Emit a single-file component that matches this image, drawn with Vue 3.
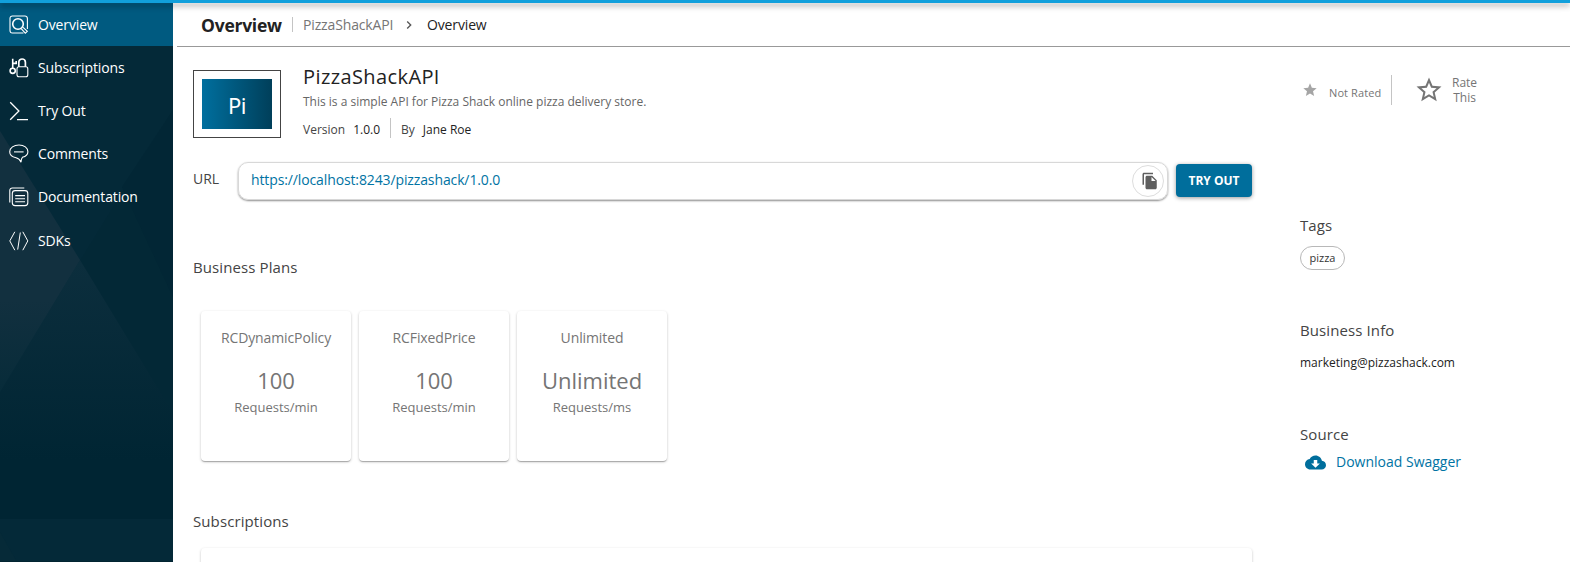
<script setup>
const menu = [
  { label: 'Overview', icon: 'overview', active: true },
  { label: 'Subscriptions', icon: 'subscriptions' },
  { label: 'Try Out', icon: 'tryout' },
  { label: 'Comments', icon: 'comments' },
  { label: 'Documentation', icon: 'docs' },
  { label: 'SDKs', icon: 'sdk' },
]
const plans = [
  { name: 'RCDynamicPolicy', count: '100', unit: 'Requests/min' },
  { name: 'RCFixedPrice', count: '100', unit: 'Requests/min' },
  { name: 'Unlimited', count: 'Unlimited', unit: 'Requests/ms' },
]
</script>

<template>
  <div class="page">
    <div class="topbar"></div>
    <div class="body">
      <aside class="sidebar">
        <svg class="backdrop" width="173" height="559" viewBox="0 3 173 559" aria-hidden="true">
          <defs>
            <linearGradient id="fadeLeft" gradientUnits="userSpaceOnUse" x1="0" y1="300" x2="0" y2="400">
              <stop offset="0" stop-color="#12303f" />
              <stop offset="1" stop-color="#062b39" />
            </linearGradient>
            <linearGradient id="fadeMid" gradientUnits="userSpaceOnUse" x1="0" y1="262" x2="0" y2="460">
              <stop offset="0" stop-color="#0c2e3d" />
              <stop offset="1" stop-color="#002533" />
            </linearGradient>
          </defs>
          <rect y="3" width="173" height="559" fill="#042938" />
          <path d="M173 110L80 261 173 413Z" fill="#032836" />
          <path d="M173 110L122 187 173 297Z" fill="#022635" />
          <path d="M0 392L80 260 173 413V519H0Z" fill="url(#fadeMid)" />
          <path d="M0 131L80 260 0 392Z" fill="url(#fadeLeft)" />
          <path d="M0 519H173V562H0Z" fill="#042938" />
          <path d="M0 532L17 562H0Z" fill="#062a38" />
          <path d="M0 561H173V562H0Z" fill="#022431" />
        </svg>
        <nav class="menu">
          <a v-for="m in menu" :key="m.label" class="item" :class="{ active: m.active }">
            <svg class="nav-icon" width="20" height="20" viewBox="0 0 20 20">
              <g v-if="m.icon === 'overview'">
                <path d="M14.5 18H3.4A2.4 2.4 0 0 1 1 15.600V3.400A2.400 2.400 0 0 1 3.400 1H16A2.400 2.400 0 0 1 18.400 3.400V14" />
                <circle cx="9" cy="9" r="5.300" stroke-width="1.600" />
                <path d="M12.200 13.700L16.300 18.200 18.300 16.300 13.800 12.200" />
              </g>
              <g v-else-if="m.icon === 'subscriptions'">
                <rect x="8" y="8.800" width="10.800" height="10" rx="2" />
                <path d="M9.800 8.800V4.300a3.300 3.300 0 0 1 6.600 0V8.800" stroke-width="1.700" />
                <circle cx="3.700" cy="12.800" r="2.600" stroke-width="1.600" />
                <path d="M3.700 10.200V.8M3.700 5.400H7.200V3" stroke-width="1.600" />
              </g>
              <path v-else-if="m.icon === 'tryout'" d="M1.200 1.300L9.900 10 1.200 18.700M8 18.600H19" stroke-width="1.300" />
              <g v-else-if="m.icon === 'comments'">
                <path d="M10 1C4.900 1 .7 3.900.7 7.700c0 3 2.600 5.200 6.400 6 2.200.6 4.100 2.200 4.900 4.500.1-2 .4-3.900 1.400-4.900 3.300-.9 5.500-3 5.500-5.600C18.900 3.900 15.100 1 10 1Z" />
                <path d="M5 7.900H14.600" />
              </g>
              <g v-else-if="m.icon === 'docs'">
                <rect x="3.300" y="3.600" width="15.500" height="15" rx="2.800" />
                <path d="M.8 15.500V3.500A2.500 2.500 0 0 1 3.300 1H15.300M6.200 8.600H16M6.200 11.700H16M6.200 14.800H16" />
              </g>
              <path v-else d="M5.800.8L.8 9.900 5.800 19.200M13.800.8L18.800 9.900 13.800 19.200M11.300 1.500L8.700 18.600" stroke-width="1" />
            </svg>
            <span>{{ m.label }}</span>
          </a>
        </nav>
      </aside>

      <main class="main">
        <header class="crumbs">
          <h1>Overview</h1>
          <span class="crumb-sep"></span>
          <span class="crumb-api">PizzaShackAPI</span>
          <svg class="chevron" width="16" height="16" viewBox="0 0 24 24"><path d="M10 6L8.590 7.410 13.170 12l-4.580 4.590L10 18l6-6z" /></svg>
          <span class="crumb-here">Overview</span>
        </header>

        <div class="columns">
          <section class="content">
            <div class="api">
              <div class="thumb"><div class="thumb-fill">Pi</div></div>
              <div class="api-text">
                <h2>PizzaShackAPI</h2>
                <p class="desc">This is a simple API for Pizza Shack online pizza delivery store.</p>
                <div class="meta">
                  <span>Version</span><b class="ver">1.0.0</b>
                  <i></i>
                  <span>By</span><b class="owner">Jane Roe</b>
                </div>
              </div>
            </div>

            <div class="url-row">
              <span class="url-label">URL</span>
              <div class="url-box">
                <span class="url">https://localhost:8243/pizzashack/1.0.0</span>
                <span class="copy">
                  <svg width="18" height="18" viewBox="0 0 24 24"><path d="M16 1H4c-1.100 0-2 .9-2 2v14h2V3h12V1zm-1 4l6 6v10c0 1.100-.9 2-2 2H7.990C6.890 23 6 22.100 6 21l.01-14c0-1.100.89-2 1.990-2h7zm-1 7h5.500L14 6.500V12z" /></svg>
                </span>
              </div>
              <button class="try">TRY OUT</button>
            </div>

            <h3 class="plans-title">Business Plans</h3>
            <div class="plans">
              <article v-for="p in plans" :key="p.name" class="plan">
                <div class="plan-name">{{ p.name }}</div>
                <div class="plan-count">{{ p.count }}</div>
                <div class="plan-unit">{{ p.unit }}</div>
              </article>
            </div>

            <h3 class="subs-title">Subscriptions</h3>
            <div class="subs-panel"></div>
          </section>

          <aside class="info">
            <div class="rating">
              <svg class="star-small" width="16" height="16" viewBox="0 0 24 24"><path d="M12 17.270L18.180 21l-1.640-7.030L22 9.240l-7.190-.61L12 2 9.190 8.630 2 9.240l5.460 4.730L5.820 21z" /></svg>
              <span class="not-rated">Not Rated</span>
              <span class="rate-sep"></span>
              <svg class="star-big" width="30" height="30" viewBox="0 0 24 24"><path d="M22 9.240l-7.190-.62L12 2 9.190 8.630 2 9.240l5.460 4.730L5.820 21 12 17.270 18.180 21l-1.630-7.030L22 9.240zM12 15.400l-3.760 2.270 1-4.280-3.320-2.880 4.380-.38L12 6.100l1.710 4.040 4.380.38-3.320 2.880 1 4.280L12 15.400z" /></svg>
              <span class="rate">Rate<br />This</span>
            </div>
            <h3 class="tags-title">Tags</h3>
            <span class="tag">pizza</span>
            <h3 class="biz-title">Business Info</h3>
            <div class="email">marketing@pizzashack.com</div>
            <h3 class="source-title">Source</h3>
            <a class="download">
              <svg width="21" height="21" viewBox="0 0 24 24"><path d="M19.350 10.040C18.670 6.590 15.640 4 12 4 9.110 4 6.600 5.640 5.350 8.040 2.340 8.360 0 10.910 0 14c0 3.310 2.690 6 6 6h13c2.760 0 5-2.240 5-5 0-2.640-2.050-4.780-4.650-4.960zM17 13l-5 5-5-5h3V9h4v4h3z" /></svg>
              <span>Download Swagger</span>
            </a>
          </aside>
        </div>
      </main>
    </div>
  </div>
</template>

<style>
body {
  margin: 0;
  overflow: hidden;
}
</style>

<style scoped>
* {
  box-sizing: border-box;
}
.page {
  height: 562px;
  overflow: hidden;
  display: flex;
  flex-direction: column;
  background: #fff;
  color: #222;
  font: 14px/20px 'Open Sans', 'Noto Sans', sans-serif;
}
.topbar {
  flex: none;
  height: 3px;
  background: #11a0dc;
  box-shadow: 0 2px 4px -1px rgba(0, 0, 0, 0.25), 0 4px 5px rgba(0, 0, 0, 0.18), 0 1px 10px rgba(0, 0, 0, 0.14);
  position: relative;
  z-index: 2;
}
.body {
  display: flex;
  height: 559px;
}
.sidebar {
  flex: none;
  position: relative;
  width: 173px;
  overflow: hidden;
  background: #042938;
}
.backdrop {
  position: absolute;
  inset: 0;
}
.menu {
  position: relative;
}
.item {
  display: flex;
  align-items: center;
  height: 43.200px;
  padding-left: 9px;
  color: #fff;
  letter-spacing: -0.140px;
}
.item.active {
  background: #005a80;
}
.nav-icon {
  margin-right: 9px;
  fill: none;
  stroke: #fff;
  stroke-width: 1.100;
}
.main {
  flex: 1;
  min-width: 0;
}
h1,
h2,
h3,
p {
  margin: 0;
  font-weight: 400;
}
.crumbs {
  display: flex;
  align-items: center;
  height: 44px;
  margin-left: 4px;
  padding-left: 24px;
  border-bottom: 1px solid #999;
  letter-spacing: -0.140px;
}
h1 {
  width: 81px;
  font-size: 17.500px;
  font-weight: 700;
  letter-spacing: -0.250px;
  white-space: nowrap;
}
.crumb-sep {
  width: 1px;
  height: 15px;
  margin: 0 10px;
  background: #c4c4c4;
}
.crumb-api {
  width: 90px;
  color: #757575;
}
.chevron {
  margin: 0 10px 0 8px;
  fill: #555;
}
.columns {
  display: grid;
  grid-template-columns: 1059px 1fr;
  column-gap: 48px;
  padding-left: 20px;
}
.api {
  display: flex;
  gap: 22px;
  height: 91px;
  padding-top: 23px;
}
.thumb {
  width: 88px;
  height: 68px;
  padding: 8px;
  border: 1px solid #444;
}
.thumb-fill {
  height: 50px;
  background: linear-gradient(to right, #006f9e, #003f5a);
  color: #fff;
  font: 22px/52px 'Noto Sans', sans-serif;
  letter-spacing: -0.500px;
  text-align: center;
}
h2 {
  margin-top: -8px;
  font-size: 20px;
  letter-spacing: 0.400px;
  line-height: 30px;
}
.desc {
  padding-top: 1px;
  color: #666;
  font-size: 12px;
  line-height: 18px;
}
.meta {
  display: flex;
  align-items: center;
  margin-top: 9px;
  color: #444;
  font-size: 12px;
}
.meta b {
  margin-left: 8px;
  color: #222;
  font-weight: 400;
}
.meta i {
  width: 1px;
  height: 20px;
  margin: -4px 10px 0;
  background: #c4c4c4;
}
.url-row {
  display: flex;
  align-items: center;
  height: 38px;
  margin-top: 24px;
}
.url-label {
  width: 45px;
  margin-top: -4px;
  color: #444;
}
.url-box {
  display: flex;
  align-items: center;
  justify-content: space-between;
  width: 930px;
  height: 38px;
  margin-top: -1px;
  padding: 0 3px 0 12px;
  border: 1px solid #d8d8d8;
  border-radius: 10px;
  box-shadow: 0 1px 2px rgba(0, 0, 0, 0.45);
}
.url {
  margin-top: -2px;
  color: #0073a3;
  letter-spacing: -0.120px;
}
.copy {
  display: flex;
  align-items: center;
  justify-content: center;
  width: 32px;
  height: 32px;
  padding-left: 4px;
  border: 1px solid #ddd;
  border-radius: 50%;
  fill: #5f5f5f;
}
.try {
  width: 76px;
  height: 33px;
  margin: -2px 0 0 8px;
  padding: 0;
  border: 0;
  border-radius: 4px;
  background: #006e9c;
  box-shadow: 0 1px 4px rgba(0, 0, 0, 0.4);
  color: #fff;
  font: 700 12px/33px 'Open Sans', 'Noto Sans', sans-serif;
}
h3 {
  color: #444;
  font-size: 15px;
  letter-spacing: 0.100px;
  line-height: 20px;
}
.plans-title {
  margin-top: 57px;
}
.plans {
  display: flex;
  gap: 8px;
  margin: 34px 0 0 8px;
}
.plan {
  width: 150px;
  height: 150px;
  padding-top: 17px;
  border-radius: 4px;
  box-shadow: 0 1px 3px rgba(0, 0, 0, 0.2), 0 1px 1px rgba(0, 0, 0, 0.14), 0 2px 1px -1px rgba(0, 0, 0, 0.12);
  color: #757575;
  text-align: center;
}
.plan-name {
  letter-spacing: -0.110px;
}
.plan-count {
  margin-top: 17px;
  font-size: 22px;
  line-height: 30px;
}
.plan-unit {
  margin-top: 2px;
  font-size: 13px;
}
.subs-title {
  margin-top: 50px;
}
.subs-panel {
  height: 60px;
  margin: 17px 0 0 8px;
  border-radius: 4px;
  box-shadow: 0 1px 3px rgba(0, 0, 0, 0.2), 0 1px 1px rgba(0, 0, 0, 0.14);
}
.rating {
  display: flex;
  align-items: center;
  height: 30px;
  margin-top: 28px;
  color: #757575;
}
.star-small {
  margin-left: 2px;
  fill: #a5a5a5;
}
.not-rated {
  width: 52px;
  margin: 6px 10px 0 11px;
  font-size: 11px;
  letter-spacing: 0.100px;
  white-space: nowrap;
}
.rate-sep {
  width: 1px;
  height: 30px;
  background: #c4c4c4;
}
.star-big {
  margin: 0 8px 0 22px;
  fill: #757575;
}
.rate {
  font-size: 12px;
  line-height: 15px;
  text-align: center;
}
.tags-title {
  margin-top: 110px;
}
.tag {
  display: block;
  width: 45px;
  height: 24px;
  margin-top: 11px;
  border: 1px solid #b8b8b8;
  border-radius: 12px;
  color: #333;
  font-size: 11px;
  line-height: 22px;
  text-align: center;
}
.biz-title {
  margin-top: 50px;
}
.email {
  margin-top: 13px;
  font-size: 12px;
}
.source-title {
  margin-top: 51px;
}
.download {
  display: flex;
  align-items: center;
  margin-top: 7px;
  color: #0073a3;
}
.download svg {
  margin: 1px 10px 0 5px;
  fill: #006e9c;
}
</style>
